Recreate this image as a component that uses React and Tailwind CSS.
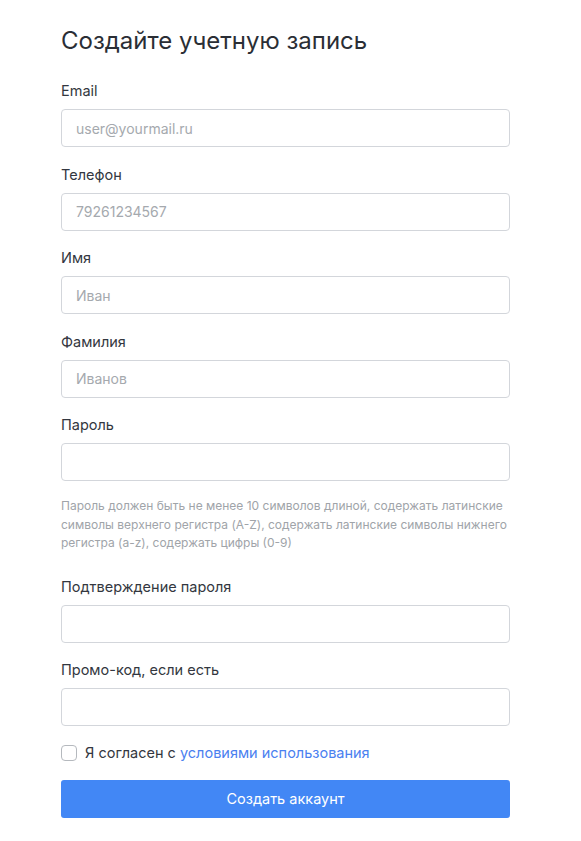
import React from "react";

function Field({ label, placeholder, type = "text", children, className = "" }) {
  return (
    <div className={className}>
      <label className="block text-[14.5px] leading-[21px] text-[#333740] mb-2">{label}</label>
      <input
        type={type}
        placeholder={placeholder}
        className="block w-full h-[38px] rounded-[4px] border border-[#d3d6db] bg-white px-[14px] text-[14px] text-[#333] placeholder:text-[#a5a9ae] outline-none"
      />
      {children}
    </div>
  );
}

export default function App() {
  return (
    <div className="min-h-[841px] bg-white" style={{ fontFamily: "Inter, 'Noto Sans', sans-serif" }}>
      <div className="ml-[61px] w-[449px] pt-[24px]">
        <h1 className="text-[24px] leading-[34px] font-normal text-[#2a2e35] mb-[22px]">Создайте учетную запись</h1>
        <Field label="Email" placeholder="user@yourmail.ru" className="mb-[16.5px]" />
        <Field label="Телефон" placeholder="79261234567" className="mb-[16.5px]" />
        <Field label="Имя" placeholder="Иван" className="mb-[16.5px]" />
        <Field label="Фамилия" placeholder="Иванов" className="mb-[16.5px]" />
        <Field label="Пароль" type="password" className="mb-[23px]">
          <p className="mt-4 text-[12px] leading-[18.5px] text-[#a0a4a9]">
            Пароль должен быть не менее 10 символов длиной, содержать латинские символы верхнего регистра (A-Z), содержать латинские символы нижнего регистра (a-z), содержать цифры (0-9)
          </p>
        </Field>
        <Field label="Подтверждение пароля" type="password" className="mb-[16.5px]" />
        <Field label="Промо-код, если есть" className="mb-[17px]" />
        <label className="flex items-center gap-[8px] h-[20px] mb-[17px] text-[14.5px] text-[#333740]">
          <span className="w-[16px] h-[16px] rounded-[4px] border border-[#b5b9be] bg-white shrink-0" />
          <span>
            Я согласен с <a className="text-[#4a80f0]">условиями использования</a>
          </span>
        </label>
        <button className="w-full h-[38px] rounded-[3px] bg-[#4287f5] text-white text-[14.5px]">Создать аккаунт</button>
      </div>
    </div>
  );
}
